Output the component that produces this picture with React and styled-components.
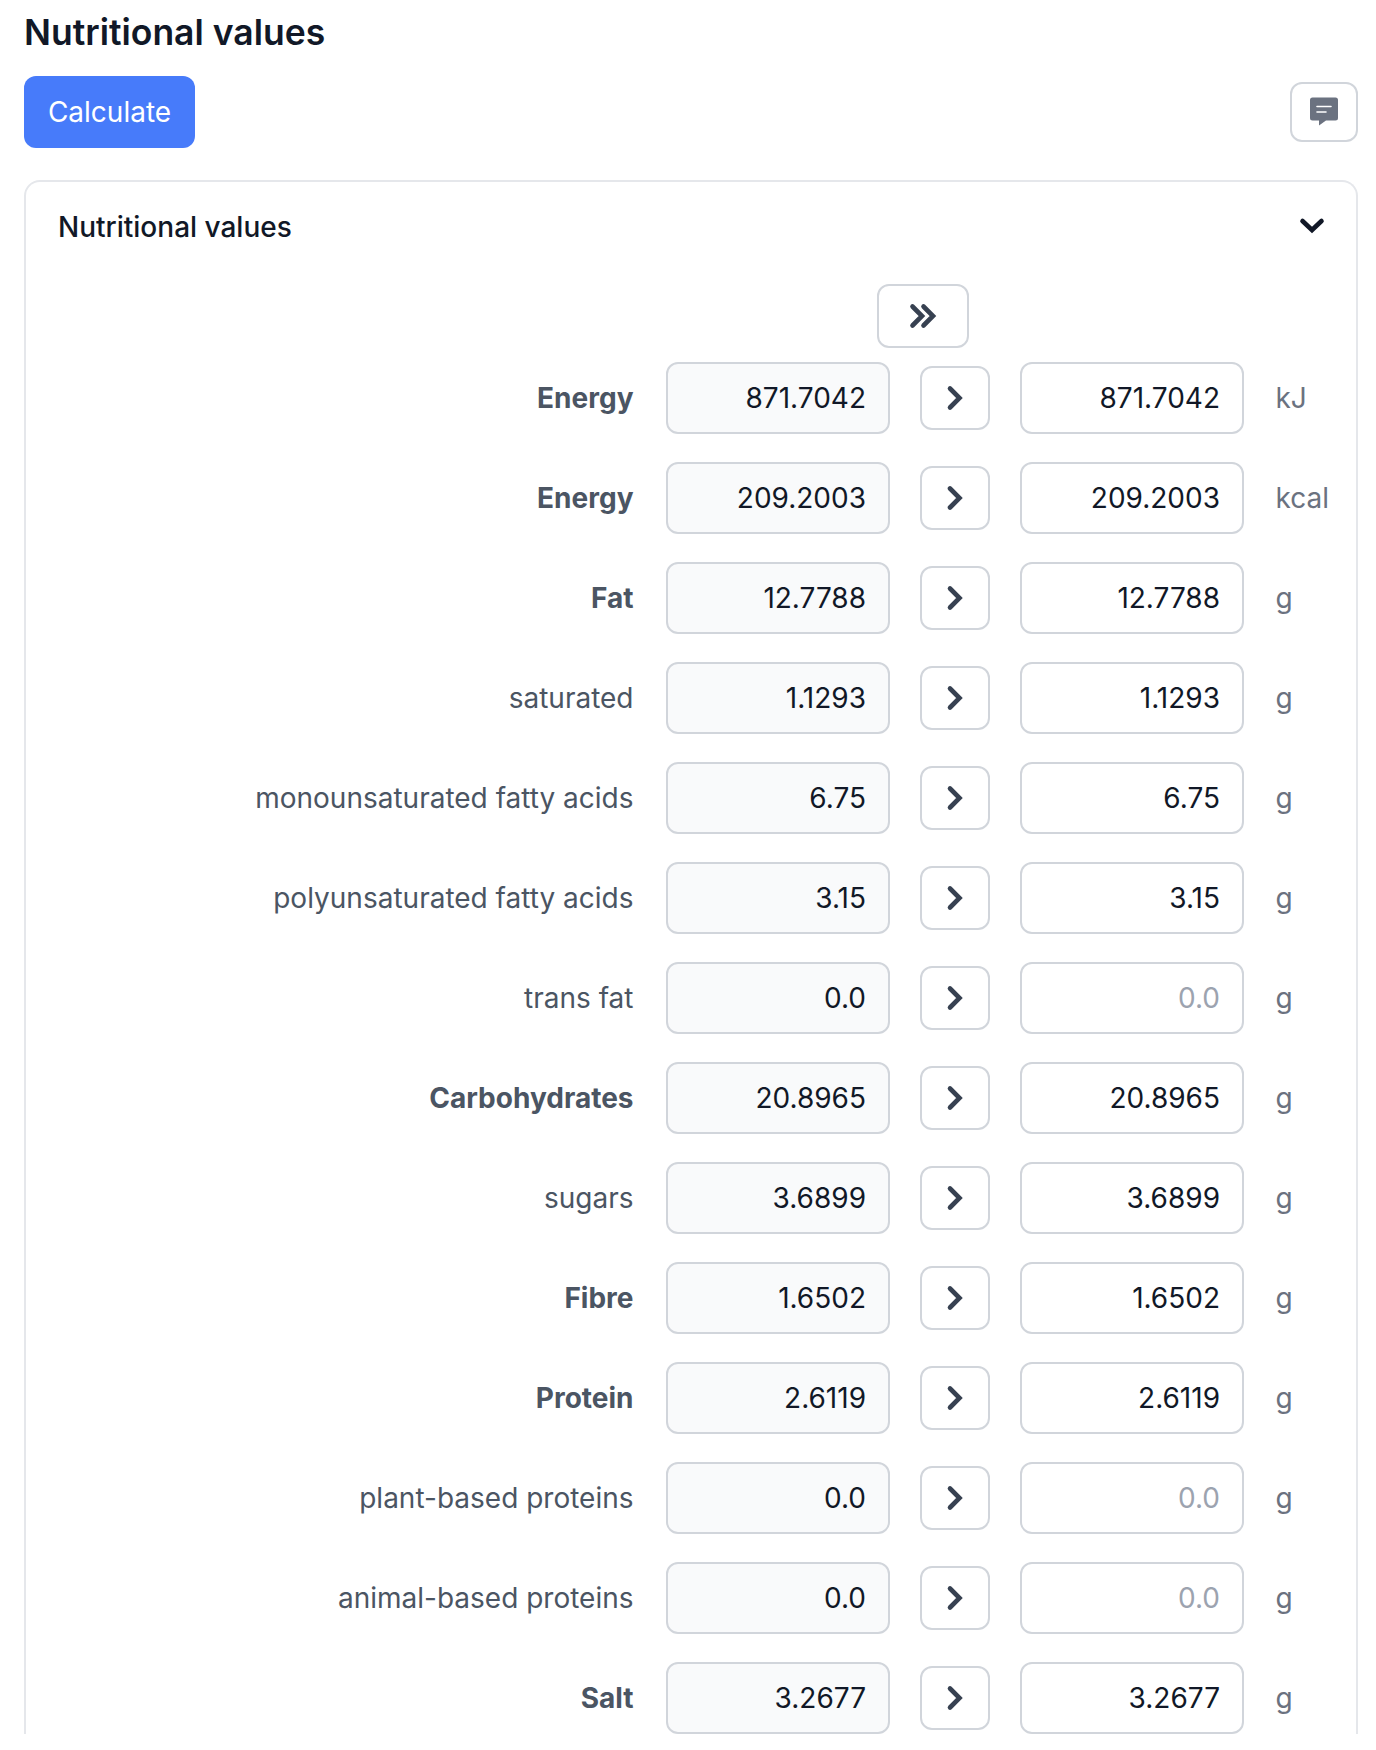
import React from "react";
import styled, { createGlobalStyle } from "styled-components";

const Global = createGlobalStyle`
  html, body { margin: 0; padding: 0; background: #fff; }
  body { font-family: Inter, "Noto Sans", sans-serif; color: #111827; }
  * { box-sizing: border-box; }
`;

const Page = styled.div`
  padding: 9px 18px 0 24px;
  height: 1750px;
  overflow: hidden;
`;
const Title = styled.h1`
  margin: 0;
  font-size: 35.5px;
  line-height: 48px;
  font-weight: 600;
  color: #111827;
`;
const Toolbar = styled.div`
  margin-top: 19px;
  display: flex;
  justify-content: space-between;
  align-items: center;
`;
const PrimaryButton = styled.button`
  width: 171px;
  height: 72px;
  border: 0;
  border-radius: 12px;
  background: #477bfa;
  color: #fff;
  font: 400 28px Inter, sans-serif;
`;
const OutlineButton = styled.button`
  display: flex;
  align-items: center;
  justify-content: center;
  padding: 0;
  background: #fff;
  border: 2px solid #d1d5db;
  border-radius: 12px;
  width: ${p => p.$w}px;
  height: ${p => p.$h}px;
  flex: none;
`;
const Card = styled.section`
  margin-top: 32px;
  border: 2px solid #e5e7eb;
  border-bottom: 0;
  border-radius: 16px 16px 0 0;
  padding: 0 32px;
`;
const CardHeader = styled.div`
  height: 88px;
  display: flex;
  align-items: center;
  justify-content: space-between;
`;
const CardTitle = styled.span`
  padding-top: 2px;
  font-size: 28px;
  font-weight: 500;
  color: #111827;
`;
const ChevronSlot = styled.span`
  display: flex;
  margin: 0 -2px 3px 0;
`;
const BulkRow = styled.div`
  margin-top: 14px;
  padding-left: 819px;
`;
const Rows = styled.div`
  margin-top: 14px;
  display: flex;
  flex-direction: column;
  gap: 28px;
`;
const Row = styled.div`
  display: grid;
  grid-template-columns: 578px 224px 70px 224px auto;
  column-gap: 30px;
  align-items: center;
  height: 72px;
`;
const Label = styled.div`
  text-align: right;
  font-size: 28px;
  font-weight: ${p => (p.$bold ? 700 : 400)};
  color: #4b5563;
  margin-right: 2.5px;
`;
const Value = styled.div`
  width: 224px;
  height: 72px;
  display: flex;
  align-items: center;
  justify-content: flex-end;
  padding-right: 22px;
  border: 2px solid #d1d5db;
  border-radius: 12px;
  font-size: 28px;
  color: ${p => (p.$empty ? "#9ca3af" : "#111827")};
  background: ${p => (p.$source ? "#f9fafb" : "#fff")};
`;
const Unit = styled.div`
  margin-left: 1.5px;
  font-size: 28px;
  color: #6b7280;
`;

const Comment = () => (
  <svg width="30" height="30" viewBox="0 0 30 30">
    <path d="M3.500 .5h23a2.500 2.500 0 0 1 2.500 2.500v18a2.500 2.500 0 0 1-2.500 2.500H17l-7 5v-5H3.500A2.500 2.500 0 0 1 1 21V3A2.500 2.500 0 0 1 3.500 .5Z" fill="#6b7280" />
    <path d="M8 9.500h14M8 15h9" stroke="#fff" strokeWidth="1.600" strokeLinecap="round" />
  </svg>
);
const Chevron = () => (
  <svg width="28" height="28" viewBox="0 0 28 28" fill="none">
    <path d="M4.500 10l9.500 9 9.500-9" stroke="#111827" strokeWidth="4.600" strokeLinecap="round" strokeLinejoin="miter" />
  </svg>
);
const Single = () => (
  <svg width="28" height="28" viewBox="0 0 28 28" fill="none">
    <path d="M9 4.500l9.500 9.500-9.500 9.500" stroke="#374151" strokeWidth="4.600" strokeLinecap="round" strokeLinejoin="miter" />
  </svg>
);
const Double = () => (
  <svg width="30" height="30" viewBox="0 0 30 30" fill="none">
    <path d="M4.500 5.500l9.500 9.500-9.500 9.500M15.500 5.500l9.500 9.500-9.500 9.500" stroke="#374151" strokeWidth="4.600" strokeLinecap="round" strokeLinejoin="miter" />
  </svg>
);

const data = [
  ["Energy", true, "871.7042", "871.7042", "kJ"],
  ["Energy", true, "209.2003", "209.2003", "kcal"],
  ["Fat", true, "12.7788", "12.7788", "g"],
  ["saturated", false, "1.1293", "1.1293", "g"],
  ["monounsaturated fatty acids", false, "6.75", "6.75", "g"],
  ["polyunsaturated fatty acids", false, "3.15", "3.15", "g"],
  ["trans fat", false, "0.0", null, "g"],
  ["Carbohydrates", true, "20.8965", "20.8965", "g"],
  ["sugars", false, "3.6899", "3.6899", "g"],
  ["Fibre", true, "1.6502", "1.6502", "g"],
  ["Protein", true, "2.6119", "2.6119", "g"],
  ["plant-based proteins", false, "0.0", null, "g"],
  ["animal-based proteins", false, "0.0", null, "g"],
  ["Salt", true, "3.2677", "3.2677", "g"],
];

export default function App() {
  return (
    <Page>
      <Global />
      <Title>Nutritional values</Title>
      <Toolbar>
        <PrimaryButton>Calculate</PrimaryButton>
        <OutlineButton $w={68} $h={60}><Comment /></OutlineButton>
      </Toolbar>
      <Card>
        <CardHeader>
          <CardTitle>Nutritional values</CardTitle>
          <ChevronSlot><Chevron /></ChevronSlot>
        </CardHeader>
        <BulkRow>
          <OutlineButton $w={92} $h={64}><Double /></OutlineButton>
        </BulkRow>
        <Rows>
          {data.map(([label, bold, source, target, unit], i) => (
            <Row key={i}>
              <Label $bold={bold}>{label}</Label>
              <Value $source>{source}</Value>
              <OutlineButton $w={70} $h={64}><Single /></OutlineButton>
              <Value $empty={target === null}>{target ?? "0.0"}</Value>
              <Unit>{unit}</Unit>
            </Row>
          ))}
        </Rows>
      </Card>
    </Page>
  );
}
